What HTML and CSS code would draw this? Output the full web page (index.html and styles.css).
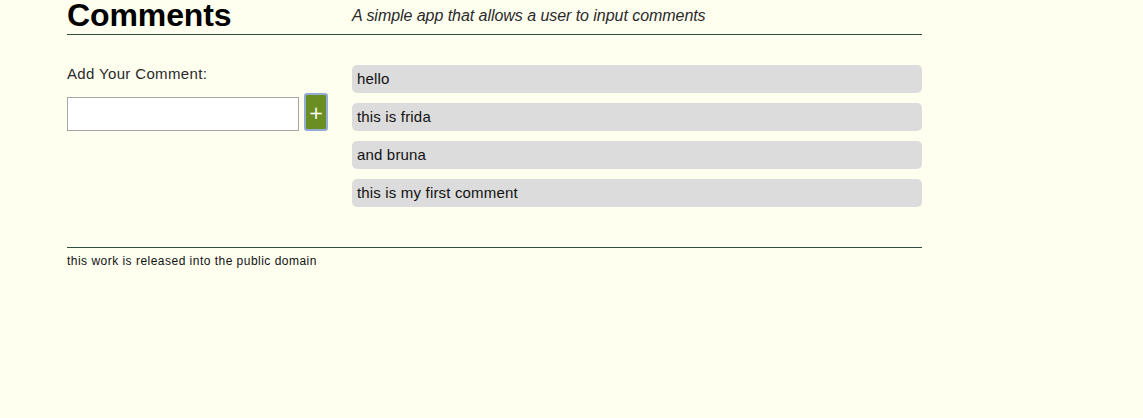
FILE: index.html
```html
<!DOCTYPE html>
<html>
<head>
<meta charset="utf-8">
<link rel="stylesheet" href="styles.css">
</head>
<body>
<div class="page">
  <header class="header">
    <h1 class="title">Comments</h1>
    <p class="subtitle">A simple app that allows a user to input comments</p>
  </header>
  <main class="main">
    <div class="form">
      <label class="label" for="c">Add Your Comment:</label>
      <div class="row">
        <input class="input" id="c" type="text">
        <button class="add" type="button">+</button>
      </div>
    </div>
    <ul class="list">
      <li class="item">hello</li>
      <li class="item">this is frida</li>
      <li class="item">and bruna</li>
      <li class="item">this is my first comment</li>
    </ul>
  </main>
  <footer class="footer">this work is released into the public domain</footer>
</div>
</body>
</html>
```
FILE: styles.css
```css
html, body {
  margin: 0;
  padding: 0;
  background: #fffff0;
}
body {
  font-family: "Liberation Sans", Arial, sans-serif;
  color: #111;
}
.page {
  width: 855px;
  margin-left: 67px;
}
.header {
  display: grid;
  grid-template-columns: 285px 570px;
  align-items: end;
  height: 34px;
  border-bottom: 1px solid #2f4f3f;
}
.title {
  margin: 0;
  font-size: 32px;
  font-weight: bold;
  line-height: 30px;
  align-self: start;
  margin-top: 0;
  letter-spacing: -0.1px;
  color: #000;
}
.subtitle {
  margin: 0;
  font-size: 16px;
  font-style: italic;
  line-height: 18px;
  align-self: start;
  margin-top: 7px;
  letter-spacing: -0.05px;
  color: #2a2a2a;
}
.main {
  display: grid;
  grid-template-columns: 285px 570px;
  padding-top: 30px;
  height: 182px;
  border-bottom: 1px solid #2f4f3f;
}
.label {
  display: block;
  font-size: 15px;
  line-height: 18px;
  letter-spacing: 0.35px;
  color: #2a2a2a;
}
.row {
  display: flex;
  align-items: flex-end;
  gap: 5px;
  margin-top: 10px;
}
.input {
  box-sizing: border-box;
  width: 232px;
  height: 34px;
  margin: 0;
  border: 1px solid #a6a6a6;
  background: #fff;
}
.add {
  box-sizing: border-box;
  width: 24px;
  height: 38px;
  margin: 0;
  padding: 0;
  border: 2px solid #93acd6;
  border-radius: 3px;
  background: #6b8e23;
  color: #fff;
  font-family: "DejaVu Sans", sans-serif;
  font-size: 18px;
  line-height: 33px;
}
.list {
  list-style: none;
  margin: 0;
  padding: 0;
  display: flex;
  flex-direction: column;
  gap: 10px;
}
.item {
  height: 28px;
  line-height: 28px;
  padding-left: 5px;
  background: #dcdcdc;
  border-radius: 5px;
  font-size: 15px;
  letter-spacing: 0.17px;
  color: #111;
}
.footer {
  font-size: 12px;
  line-height: 14px;
  padding-top: 6px;
  letter-spacing: 0.48px;
  color: #111;
}
```
